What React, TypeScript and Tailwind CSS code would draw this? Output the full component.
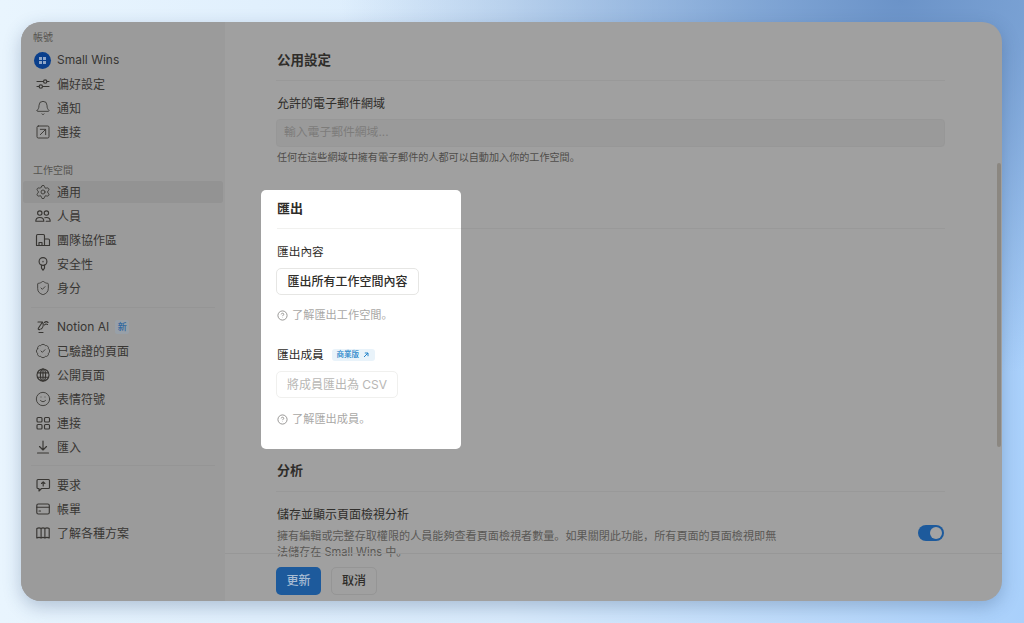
import type { ReactNode } from "react";
import { Bell, BadgeCheck, Settings, ShieldCheck, Smile, SquareArrowUpRight } from "lucide-react";

const font = "font-['Inter','Noto_Sans_CJK_SC','Noto_Sans',sans-serif]";

function Svg({ children }: { children: ReactNode }) {
  return (
    <svg
      viewBox="0 0 16 16"
      fill="none"
      stroke="currentColor"
      strokeWidth="1.15"
      strokeLinecap="round"
      strokeLinejoin="round"
      className="h-4 w-4 shrink-0"
    >
      {children}
    </svg>
  );
}

const lucideClass = "h-4 w-4 shrink-0";

const icons = {
  avatar: (
    <div className="flex h-[17px] w-[17px] shrink-0 -translate-x-px items-center justify-center rounded-full bg-[#0a3f8c]">
      <div className="grid grid-cols-2 gap-[1px]">
        <div className="h-[3px] w-[3px] bg-[#8fa6c8]" />
        <div className="h-[3px] w-[3px] bg-[#8fa6c8]" />
        <div className="h-[3px] w-[3px] bg-[#8fa6c8]" />
        <div className="h-[3px] w-[3px] bg-[#8fa6c8]" />
      </div>
    </div>
  ),
  sliders: (
    <Svg>
      <path d="M2 5.500h6.500M12 5.500h2M2 10.500h2M7.500 10.500H14" />
      <circle cx="10.200" cy="5.500" r="1.700" />
      <circle cx="5.800" cy="10.500" r="1.700" />
    </Svg>
  ),
  bell: <Bell className={lucideClass} strokeWidth={1.3} />,
  connect: <SquareArrowUpRight className={lucideClass} strokeWidth={1.4} />,
  gear: <Settings className={lucideClass} strokeWidth={1.3} />,
  people: (
    <Svg>
      <circle cx="4.800" cy="5" r="2.200" />
      <circle cx="11.400" cy="5" r="2.200" />
      <path d="M.8 13.200c0-2.200 1.600-3.700 4-3.700s4 1.500 4 3.700zM9.800 9.700c.5-.15 1-.2 1.600-.2 2.300 0 3.800 1.500 3.800 3.700h-4" />
    </Svg>
  ),
  building: (
    <Svg>
      <path d="M1.500 13.500V3.700c0-.7.5-1.200 1.200-1.200h5.600c.7 0 1.200.5 1.200 1.200v9.800zM9.500 7h3.800c.7 0 1.200.5 1.200 1.200v5.300h-5" />
      <path d="M4 10.500h3v3H4z" />
    </Svg>
  ),
  keyhole: (
    <Svg>
      <circle cx="8" cy="5.500" r="3.900" />
      <path d="M6.500 9.100v3L8 14.300l1.500-2.200v-3M8 5.200v.6" />
    </Svg>
  ),
  shield: <ShieldCheck className={lucideClass} strokeWidth={1.3} />,
  ai: (
    <Svg>
      <path d="M3 3h4.500L3.500 9c-.8 1.300.2 2 1.300 1.400M4 13.500h4M6 10c2-1 2.500-4 2-6M9.500 3.500c1-1 2.500-1 3.500 0M9.500 6c.8-1 2-1.200 3-.5" />
    </Svg>
  ),
  verified: <BadgeCheck className={lucideClass} strokeWidth={1.3} />,
  globe: (
    <Svg>
      <circle cx="8" cy="8" r="6" />
      <ellipse cx="8" cy="8" rx="2.600" ry="6" />
      <path d="M8 2v12M2.500 5.800h11M2.500 10.200h11" />
    </Svg>
  ),
  smile: <Smile className={lucideClass} strokeWidth={1.3} />,
  grid: (
    <Svg>
      <rect x="2" y="2.500" width="5" height="4.500" rx="1" />
      <rect x="9.500" y="2.500" width="5" height="4.500" rx="1" />
      <rect x="2" y="9.500" width="5" height="4.500" rx="1" />
      <rect x="9.500" y="9.500" width="5" height="4.500" rx="1" />
    </Svg>
  ),
  download: (
    <Svg>
      <path d="M8 2v9M4.500 7.500 8 11l3.500-3.500M2.500 14h11" />
    </Svg>
  ),
  request: (
    <Svg>
      <path d="M3 2.500h10.500c.6 0 1 .4 1 1v7c0 .6-.4 1-1 1H6.500L4 14v-2.500H3c-.6 0-1-.4-1-1v-7c0-.6.4-1 1-1z" />
      <path d="M8.200 9V5M6.500 6.500 8.200 4.800l1.700 1.700" />
    </Svg>
  ),
  card: (
    <Svg>
      <rect x="1.800" y="3" width="12.500" height="10" rx="1.500" />
      <path d="M1.800 6.200h12.500M4 10h1.500" />
    </Svg>
  ),
  map: (
    <Svg>
      <path d="M1.800 3.500c1.500-.8 3-.8 4.300 0v9.500c-1.300-.8-2.800-.8-4.300 0zM6.100 3.500c1.200-.8 2.600-.8 3.800 0v9.500c-1.200-.8-2.600-.8-3.800 0zM9.900 3.500c1.300-.8 2.800-.8 4.300 0v9.500c-1.500-.8-3-.8-4.300 0z" />
    </Svg>
  ),
};

type Row = { icon: keyof typeof icons; label: string; active?: boolean; isNew?: boolean; latin?: boolean };

const accountRows: Row[] = [
  { icon: "avatar", label: "Small Wins", latin: true },
  { icon: "sliders", label: "偏好設定" },
  { icon: "bell", label: "通知" },
  { icon: "connect", label: "連接" },
];

const workspaceRows: Row[] = [
  { icon: "gear", label: "通用", active: true },
  { icon: "people", label: "人員" },
  { icon: "building", label: "團隊協作區" },
  { icon: "keyhole", label: "安全性" },
  { icon: "shield", label: "身分" },
];

const featureRows: Row[] = [
  { icon: "ai", label: "Notion AI", isNew: true, latin: true },
  { icon: "verified", label: "已驗證的頁面" },
  { icon: "globe", label: "公開頁面" },
  { icon: "smile", label: "表情符號" },
  { icon: "grid", label: "連接" },
  { icon: "download", label: "匯入" },
];

const planRows: Row[] = [
  { icon: "request", label: "要求" },
  { icon: "card", label: "帳單" },
  { icon: "map", label: "了解各種方案" },
];

function NavRows({ rows }: { rows: Row[] }) {
  return (
    <div className="flex flex-col gap-[2px]">
      {rows.map((row) => (
        <div
          key={row.label + row.icon}
          className={`mx-[2px] flex h-[22px] items-center gap-[6px] rounded-[3px] pl-[12px] text-[12px] text-[#383633] ${
            row.active ? "bg-[#939393]" : ""
          }`}
        >
          <span className="flex w-4 shrink-0 items-center justify-center">{icons[row.icon]}</span>
          <span className={row.latin ? "" : "pt-[2px]"}>{row.label}</span>
          {row.isNew && (
            <span className="flex h-[14px] w-[14px] items-center justify-center rounded-[2px] bg-[#98a0a8] text-[9px] font-medium text-[#2f679f]">
              新
            </span>
          )}
        </div>
      ))}
    </div>
  );
}

function HelpLine({ text }: { text: string }) {
  return (
    <div className="flex h-4 items-center gap-[4px] pt-[1px] text-[11.200px] text-[#a9a8a6]">
      <svg viewBox="0 0 12 12" fill="none" stroke="currentColor" className="h-[11px] w-[11px] shrink-0 text-[#8f8e8c]">
        <circle cx="6" cy="6" r="5" />
        <path d="M4.600 4.800C4.700 4 5.300 3.500 6 3.500c.8 0 1.400.5 1.400 1.200 0 1-1.400 1-1.400 2" />
        <path d="M6 8.400v.3" />
      </svg>
      <span>{text}</span>
    </div>
  );
}

function ExportDialog() {
  return (
    <div className="absolute left-[240px] top-[168px] h-[259px] w-[200px] rounded-[5px] bg-white text-[#2f2d2a]">
      <div className="ml-[16px] flex h-[39px] items-center border-b border-[#f1f1ef] text-[13px] font-semibold">匯出</div>
      <div className="flex flex-col items-start pl-[15px]">
        <div className="mt-[15px] flex h-4 items-center pl-[1px] pt-[2px] text-[11.700px]">匯出內容</div>
        <div className="mt-[8px] flex h-[27px] w-[143px] items-center justify-center rounded-[5px] border border-[#e6e6e4] text-[12px] font-medium">
          匯出所有工作空間內容
        </div>
        <div className="mt-[12px] pl-[1px]">
          <HelpLine text="了解匯出工作空間。" />
        </div>
        <div className="mt-[24px] flex h-4 items-center pl-[1px] text-[11.700px]">
          <span className="pt-[2px]">匯出成員</span>
          <span className="ml-[8px] flex h-[12px] w-[43px] items-center justify-center gap-[3px] rounded-[3px] bg-[#e9f3fa] text-[7.500px] font-medium text-[#2383c9]">
            商業版
            <svg viewBox="0 0 8 8" fill="none" stroke="currentColor" strokeWidth="1" className="h-[8px] w-[8px]">
              <path d="M2 6l4-4M2.800 2H6v3.200" />
            </svg>
          </span>
        </div>
        <div className="mt-[8px] flex h-[27px] w-[122px] items-center justify-center rounded-[5px] border border-[#f0f0ee] text-[12px] text-[#b8b7b5]">
          將成員匯出為 CSV
        </div>
        <div className="mt-[13px] pl-[1px]">
          <HelpLine text="了解匯出成員。" />
        </div>
      </div>
    </div>
  );
}

export default function App() {
  return (
    <div
      className={`flex h-[623px] w-[1024px] items-start overflow-hidden bg-[radial-gradient(ellipse_560px_380px_at_88%_0%,#6b93c8_0%,#6b93c800_100%),linear-gradient(90deg,#e9f5fe_0%,#d9ebfc_50%,#a9d0fb_100%)] pl-[21px] pt-[22px] ${font}`}
    >
      <div className="relative flex h-[579px] w-[981px] overflow-hidden rounded-[20px] bg-[#a0a0a0] shadow-[0_6px_18px_rgba(40,70,110,0.28)]">
        <aside className="flex w-[204px] shrink-0 flex-col bg-[#9b9b9b] pt-[8px]">
          <div className="mb-[5px] flex h-[14px] items-center pl-[12px] text-[10px] text-[#55534f]">帳號</div>
          <NavRows rows={accountRows} />
          <div className="mb-[4px] mt-[20px] flex h-[14px] items-center pl-[12px] text-[10px] text-[#55534f]">工作空間</div>
          <NavRows rows={workspaceRows} />
          <div className="mx-[10px] my-[8px] h-px bg-[#959595]" />
          <NavRows rows={featureRows} />
          <div className="mx-[10px] mb-[8px] mt-[7px] h-px bg-[#959595]" />
          <NavRows rows={planRows} />
        </aside>

        <main className="flex min-w-0 flex-1 flex-col">
          <div className="mb-[-6px] flex-1 overflow-hidden pl-[51px] pr-[57px] pt-[28px] text-[#2f2d2a]">
            <h2 className="flex h-5 items-center pl-[1px] text-[13.500px] font-semibold">公用設定</h2>
            <div className="mt-[10px] h-px bg-[#999999]" />
            <div className="mt-[14px] flex h-4 items-center pl-[1px] pt-[2px] text-[12px]">允許的電子郵件網域</div>
            <div className="mt-[8px] flex h-[28px] items-center rounded-[4px] border border-[#979797] bg-[#9a9a9a] pl-[7px] text-[11.800px] text-[#7d7c7a]">
              輸入電子郵件網域...
            </div>
            <div className="mt-[3px] flex h-[14px] items-center pl-[1px] pt-[1px] text-[10.100px] text-[#4f4d4a]">
              任何在這些網域中擁有電子郵件的人都可以自動加入你的工作空間。
            </div>
            <div className="mt-[64px] h-px bg-[#999999]" />

            <h2 className="mt-[232px] flex h-5 items-center pl-[1px] text-[13px] font-semibold">分析</h2>
            <div className="mt-[10px] h-px bg-[#999999]" />
            <div className="mt-[14px] flex items-center justify-between">
              <div className="w-[504px]">
                <div className="flex h-4 items-center pl-[1px] pt-[2px] text-[12px]">儲存並顯示頁面檢視分析</div>
                <p className="mt-[6px] pl-[1px] text-[11.100px] leading-[16px] text-[#5a5855]">
                  {"擁有編輯或完整存取權限的人員能夠查看頁面檢視者數量。如果關閉此功能\uFF0C所有頁面的頁面檢視即無法儲存在 Small Wins 中。"}
                </p>
              </div>
              <div className="mr-[1px] flex h-4 w-[26px] items-center justify-end rounded-full bg-[#1d5a9c] pr-[2px]">
                <div className="h-3 w-3 rounded-full bg-[#a3a3a3]" />
              </div>
            </div>
          </div>

          <footer className="z-10 flex h-[48px] shrink-0 items-start gap-[10px] border-t border-[#979797] pl-[51px] pt-[13px]">
            <button className="flex h-[28px] w-[45px] items-center justify-center rounded-[5px] bg-[#1d5a9c] text-[12px] font-medium text-[#a8bcd3]">
              更新
            </button>
            <button className="flex h-[28px] w-[46px] items-center justify-center rounded-[5px] border border-[#959595] text-[12px] font-medium text-[#2f2d2a]">
              取消
            </button>
          </footer>
        </main>

        <ExportDialog />
        <div className="absolute right-[1px] top-[141px] h-[284px] w-[4px] rounded-full bg-[#8b8781]" />
      </div>
    </div>
  );
}
